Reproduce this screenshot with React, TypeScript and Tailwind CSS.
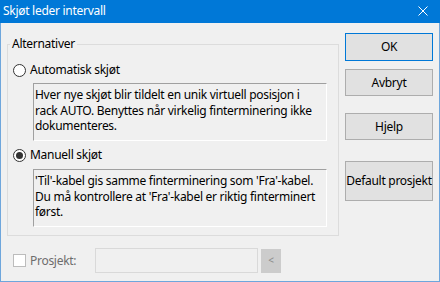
import React from "react";

function Radio({ checked }: { checked?: boolean }) {
  return (
    <span className="w-[13px] h-[13px] rounded-full border border-[#333333] bg-white flex items-center justify-center shrink-0">
      {checked && <span className="w-[7px] h-[7px] rounded-full bg-[#333333]" />}
    </span>
  );
}

function Btn({ children, cls }: { children: React.ReactNode; cls: string }) {
  return (
    <div className={`w-[88px] flex items-center justify-center bg-[#e1e1e1] text-black whitespace-nowrap ${cls}`}>{children}</div>
  );
}

export default function App() {
  return (
    <div className="w-[440px] h-[282px] flex flex-col bg-[#f0f0f0] font-['Segoe_UI','Noto_Sans',sans-serif] text-[12px] tracking-[-0.28px] text-black overflow-hidden">
      <div className="h-[23px] bg-[#0078d7] flex items-center justify-between pl-[3px] pr-[12px] text-white shrink-0">
        <span className="leading-[16px] -mt-[1px]">Skjøt leder intervall</span>
        <svg width="10" height="10" viewBox="0 0 10 10" className="-mt-[1px]">
          <path d="M0.5 0.5 L9.5 9.5 M9.5 0.5 L0.5 9.5" stroke="white" strokeWidth="1" />
        </svg>
      </div>
      <div className="flex-1 flex border-x border-b border-[#6ea6dc]">
        <div className="ml-[6px] w-[332px] flex flex-col">
          <fieldset className="mt-[13px] h-[200px] border border-[#dcdcdc] p-0 m-0">
            <legend className="ml-[2px] px-[2px] leading-[16px]">Alternativer</legend>
            <div className="pt-[10px] flex flex-col">
              <div className="flex items-center gap-[4px] h-[16px] ml-[5px] leading-[16px]">
                <Radio />
                <span>Automatisk skjøt</span>
              </div>
              <div className="ml-[25px] mt-[5px] w-[294px] h-[58px] border border-t-[#a0a0a0] border-l-[#a0a0a0] border-b-white border-r-white pl-[1px] pt-[3px] leading-[15.5px] whitespace-nowrap">
                Hver nye skjøt blir tildelt en unik virtuell posisjon i<br />
                rack AUTO. Benyttes når virkelig finterminering ikke<br />
                dokumenteres.
              </div>
              <div className="flex items-center gap-[4px] h-[16px] ml-[5px] mt-[6px] leading-[16px]">
                <Radio checked />
                <span>Manuell skjøt</span>
              </div>
              <div className="ml-[25px] mt-[6px] w-[294px] h-[58px] border border-t-[#a0a0a0] border-l-[#a0a0a0] border-b-white border-r-white pl-[1px] pt-[3px] leading-[15.5px] whitespace-nowrap">
                'Til'-kabel gis samme finterminering som 'Fra'-kabel.<br />
                Du må kontrollere at 'Fra'-kabel er riktig finterminert<br />
                først.
              </div>
            </div>
          </fieldset>
          <div className="mt-[12px] flex items-center h-[25px]">
            <div className="w-[88px] flex items-center gap-[4px] pl-[6px]">
              <span className="w-[13px] h-[13px] border border-[#bcbcbc] bg-white shrink-0" />
              <span className="text-[#6d6d6d] leading-[16px]">Prosjekt:</span>
            </div>
            <div className="w-[163px] h-[25px] border border-[#d9d9d9] bg-[#f0f0f0]" />
            <div className="ml-[3px] w-[20px] h-[24px] bg-[#cccccc] flex items-center justify-center text-[#8a8a8a] text-[10px]">&lt;</div>
          </div>
        </div>
        <div className="ml-[6px] flex flex-col">
          <Btn cls="mt-[10px] h-[28px] border border-[#0078d7]">OK</Btn>
          <Btn cls="mt-[8px] h-[27px] border border-[#adadad]">Avbryt</Btn>
          <Btn cls="mt-[17px] h-[27px] border border-[#adadad]">Hjelp</Btn>
          <Btn cls="mt-[21px] h-[40px] border border-[#adadad]">Default prosjekt</Btn>
        </div>
      </div>
    </div>
  );
}
